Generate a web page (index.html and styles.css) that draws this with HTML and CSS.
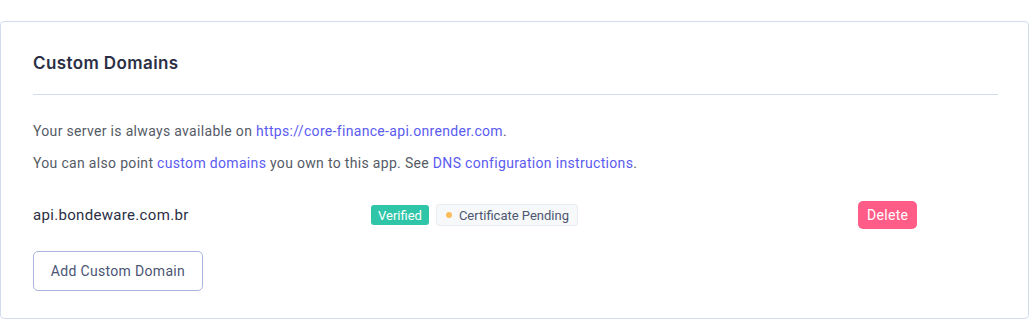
FILE: index.html
```html
<!DOCTYPE html>
<html lang="en">
<head>
    <meta charset="UTF-8">
    <meta name="viewport" content="width=device-width, initial-scale=1.0">
    <title>Custom Domains</title>
    <link rel="stylesheet" href="styles.css">
</head>
<body>
    <section class="card">
        <h2 class="card-title">Custom Domains</h2>

        <p class="note">Your server is always available on <a href="#">https://core-finance-api.onrender.com</a>.</p>
        <p class="note">You can also point <a href="#">custom domains</a> you own to this app. See <a href="#">DNS configuration instructions</a>.</p>

        <div class="domain-row">
            <div class="domain-name">api.bondeware.com.br</div>
            <div class="badges">
                <span class="badge badge-verified">Verified</span>
                <span class="badge badge-pending"><span class="dot"></span>Certificate Pending</span>
            </div>
            <div class="actions">
                <button class="btn-delete">Delete</button>
            </div>
        </div>

        <button class="btn-add">Add Custom Domain</button>
    </section>
</body>
</html>
```

FILE: styles.css
```css
body {
    margin: 0;
    padding-top: 21px;
    font-family: Roboto, "Liberation Sans", sans-serif;
    letter-spacing: 0.32px;
    background: #fff;
}
.card {
    margin-right: 1px;
    border: 1px solid #d3dcee;
    border-radius: 4px;
    padding: 30px 30px 27px 32px;
    height: 298px;
    box-sizing: border-box;
}
.card-title {
    margin: 0;
    padding-bottom: 20px;
    border-bottom: 1px solid #d3dcee;
    font-family: Inter, "Noto Sans", sans-serif;
    font-size: 17px;
    font-weight: 600;
    line-height: 22px;
    letter-spacing: 0.4px;
    color: #2b2f45;
}
.note {
    margin: 26px 0 0;
    font-size: 14px;
    line-height: 20px;
    color: #555b66;
}
.note + .note {
    margin-top: 12px;
}
.note a {
    color: #5b5bf0;
    text-decoration: none;
}
.domain-row {
    display: grid;
    grid-template-columns: 338px 487px auto;
    align-items: center;
    margin-top: 28px;
}
.domain-name {
    font-size: 15px;
    color: #2b2f45;
}
.badges {
    display: flex;
    align-items: center;
    gap: 7px;
}
.badge {
    display: inline-flex;
    align-items: center;
    font-size: 13px;
    letter-spacing: 0;
    border-radius: 3px;
}
.badge-verified {
    height: 20px;
    padding: 0 7px;
    background: #2fc5a9;
    color: #fff;
}
.badge-pending {
    height: 20px;
    padding: 0 8px 0 9px;
    background: #f6f8fa;
    border: 1px solid #e8ecf1;
    color: #4c5670;
}
.dot {
    width: 6px;
    height: 6px;
    border-radius: 50%;
    background: #fbbd5b;
    margin-right: 7px;
}
.btn-delete {
    height: 28px;
    padding: 0 9px;
    border: none;
    border-radius: 5px;
    background: #ff5c87;
    color: #fff;
    font-family: inherit;
    font-size: 14px;
    letter-spacing: inherit;
    cursor: pointer;
}
.btn-add {
    margin-top: 22px;
    height: 40px;
    width: 170px;
    border: 1px solid #a9b5db;
    border-radius: 5px;
    background: #fff;
    color: #4a5573;
    font-family: inherit;
    font-size: 14px;
    letter-spacing: inherit;
    cursor: pointer;
}
```
